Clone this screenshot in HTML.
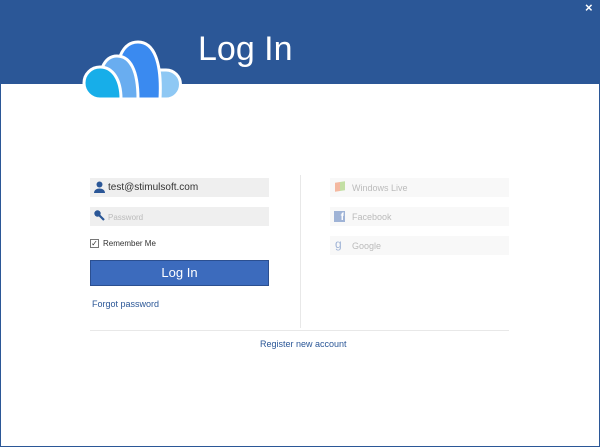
<!DOCTYPE html>
<html><head><style>
*{margin:0;padding:0;box-sizing:border-box}
body{width:600px;height:447px;position:relative;background:#fff;font-family:"Liberation Sans",sans-serif;overflow:hidden}
.frame{position:absolute;left:0;top:0;width:600px;height:447px;border:1px solid #2b5797}
.hdr{position:absolute;left:0;top:0;width:600px;height:84px;background:#2b5797}
.title{position:absolute;left:198px;top:30px;color:#fff;font-size:34px;font-weight:normal}
.x{position:absolute;left:585px;top:0px;color:#fff;font-size:13px;font-weight:bold}
.inp{position:absolute;left:90px;width:179px;height:19px;background:#efefef;font-size:10px;color:#333}
.rb{position:absolute;left:330px;width:179px;height:19px;background:#f8f8f8;font-size:9px;color:#bbb;padding:5px 0 0 22px}
.btn{position:absolute;left:90px;top:260px;width:179px;height:26px;background:#3c6bbd;border:1px solid #2b4f90;color:#fff;font-size:13px;text-align:center;line-height:24px}
.link{position:absolute;color:#2b5797;font-size:9px}
</style></head><body>
<div class="hdr"></div>
<div class="frame"></div>
<div class="x">×</div>
<div class="title">Log In</div>
<svg style="position:absolute;left:0;top:0" width="200" height="110" viewBox="0 0 200 110">
<g stroke="#fff" stroke-width="3" stroke-linejoin="round">
<path d="M150 99 L166 99 A14.5 14.5 0 0 0 166 70 L150 70 Z" fill="#8ec8f4"/>
<path d="M116 99 L160 99 C162 62 154 42 138 42 C122 42 114 60 116 99 Z" fill="#3a8af0"/>
<path d="M98 99 L138 99 C138 70 130 56 117 56 C104 56 98 70 98 99 Z" fill="#69adf0"/>
<path d="M100 99 A16 16 0 0 1 100 67 C113 67 121 80 121 99 Z" fill="#17aee9"/>
</g>
</svg>
<div class="inp" style="top:178px;padding:4px 0 0 18px">test@stimulsoft.com</div>
<svg style="position:absolute;left:94px;top:181px" width="11" height="12"><circle cx="5.5" cy="3.5" r="3" fill="#2b5797"/><path d="M0 12 C0 6 11 6 11 12Z" fill="#2b5797"/></svg>
<div class="inp" style="top:207px;padding:6px 0 0 18px;font-size:8px;color:#bbb">Password</div>
<svg style="position:absolute;left:94px;top:210px" width="11" height="11"><circle cx="3.5" cy="3.5" r="3.2" fill="#2b5797"/><path d="M5 5 L10 10" stroke="#2b5797" stroke-width="2.2"/></svg>
<div style="position:absolute;left:90px;top:239px;width:9px;height:9px;border:1px solid #777;font-size:8px;line-height:7px;text-align:center;color:#333">✓</div>
<div style="position:absolute;left:103px;top:239px;font-size:8px;color:#333">Remember Me</div>
<div class="btn">Log In</div>
<div class="link" style="left:92px;top:299px">Forgot password</div>
<div style="position:absolute;left:300px;top:175px;width:1px;height:153px;background:#e8e8e8"></div>
<div style="position:absolute;left:90px;top:330px;width:419px;height:1px;background:#e8e8e8"></div>
<div class="link" style="left:260px;top:339px">Register new account</div>
<div class="rb" style="top:178px">Windows Live</div>
<div style="position:absolute;left:335px;top:182px;width:10px;height:9px;background:linear-gradient(90deg,#f3a88a 50%,#b6d98f 50%);opacity:.8;transform:skewY(-8deg)"></div>
<div class="rb" style="top:207px">Facebook</div>
<div style="position:absolute;left:334px;top:211px;width:11px;height:11px;background:#9fb3d6;color:#fff;font-size:10px;font-weight:bold;text-align:right;line-height:13px;padding-right:1px">f</div>
<div class="rb" style="top:236px">Google</div>
<div style="position:absolute;left:335px;top:237px;font-size:12px;color:#9fb3d6">g</div>
</body></html>
